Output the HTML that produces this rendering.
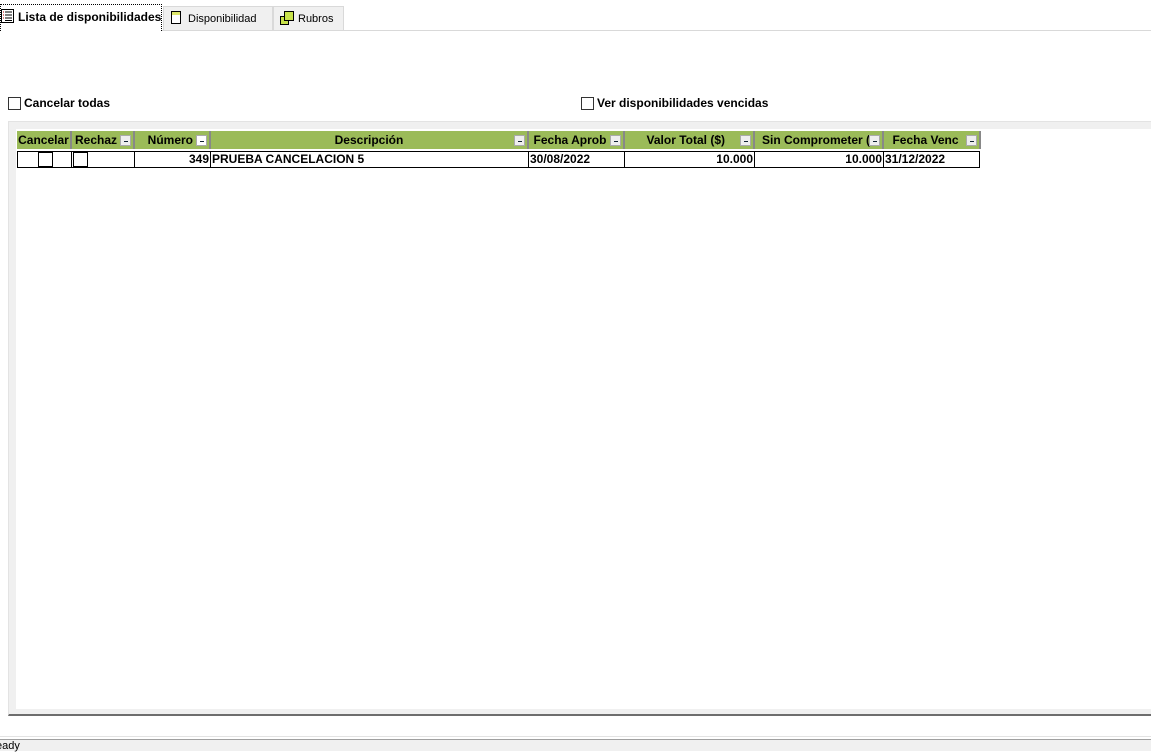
<!DOCTYPE html>
<html><head><style>
body{margin:0;width:1151px;height:750px;background:#fff;font-family:"Liberation Sans",sans-serif;font-size:12px;position:relative;overflow:hidden}
.abs{position:absolute;white-space:nowrap}
.tab{position:absolute;top:6px;height:24px;border:1px solid #d9d9d9;border-bottom:none;background:#f0f0f0;font-size:11px;line-height:24px;box-sizing:border-box;padding-left:6px;white-space:nowrap}
.cb{position:absolute;width:13px;height:13px;border:1px solid #333;background:#fff;box-sizing:border-box}
.h{position:absolute;top:131px;height:18px;background:#9bbb59;border-right:2px solid #888;box-sizing:border-box;font-weight:bold;line-height:18px;font-size:12px;text-align:center;color:#000;overflow:hidden;white-space:nowrap}
.dd{position:absolute;right:2px;top:4px;width:11px;height:11px;background:#eee;border:1px solid #aaa;box-sizing:border-box}
.dd:after{content:"";position:absolute;left:3px;top:5px;width:4px;height:1px;background:#123}
.c{position:absolute;top:151px;height:17px;border:1px solid #000;border-left:none;box-sizing:border-box;font-weight:bold;line-height:15px;font-size:12px;white-space:nowrap;padding:0 1px}
</style></head><body>
<div class="abs" style="left:0;top:30px;width:1151px;height:1px;background:#d9d9d9"></div>
<div class="tab" style="left:0;top:4px;height:27px;width:162px;background:#fff;border:1px dotted #000;border-bottom:none;font-weight:bold;font-size:12px;padding-left:17px;line-height:24px;overflow:hidden">Lista de disponibilidades</div>
<svg class="abs" style="left:1px;top:9px" width="14" height="14"><rect x="0.5" y="0.5" width="12" height="13" fill="#fff" stroke="#000"/><g stroke="#c00"><line x1="2" y1="3" x2="3" y2="3"/><line x1="2" y1="6" x2="3" y2="6"/><line x1="2" y1="9" x2="3" y2="9"/></g><g stroke="#000"><line x1="4" y1="3" x2="11" y2="3"/><line x1="4" y1="6" x2="11" y2="6"/><line x1="4" y1="9" x2="11" y2="9"/><line x1="4" y1="11.5" x2="11" y2="11.5"/></g></svg>
<div class="tab" style="left:163px;width:110px;padding-left:24px">Disponibilidad</div>
<svg class="abs" style="left:171px;top:11px" width="11" height="14"><rect x="0.5" y="0.5" width="9" height="12" fill="#fff" stroke="#000"/><rect x="1" y="1" width="8" height="3" fill="#dde66a"/></svg>
<div class="tab" style="left:273px;width:71px;padding-left:24px">Rubros</div>
<svg class="abs" style="left:280px;top:11px" width="14" height="14"><rect x="0.5" y="5.5" width="8" height="8" fill="#c8e24a" stroke="#000"/><rect x="4.5" y="0.5" width="9" height="9" fill="#c8e24a" stroke="#000"/></svg>

<div class="cb" style="left:8px;top:97px"></div>
<div class="abs" style="left:24px;top:96px;font-weight:bold">Cancelar todas</div>
<div class="cb" style="left:581px;top:97px"></div>
<div class="abs" style="left:597px;top:96px;font-weight:bold">Ver disponibilidades vencidas</div>

<div class="abs" style="left:8px;top:121px;width:1143px;height:595px;background:#f0f0f0;border-top:1px solid #e3e3e3;border-left:1px solid #e3e3e3;box-sizing:border-box;border-bottom:2px solid #6d6d6d"></div>
<div class="abs" style="left:16px;top:129px;width:1135px;height:580px;background:#fff"></div>

<div class="h" style="left:17px;width:55px">Cancelar</div>
<div class="h" style="left:72px;width:63px;text-align:left;padding-left:3px">Rechaz<span class="dd"></span></div>
<div class="h" style="left:135px;width:76px;text-align:right;padding-right:16px">Número<span class="dd" style="background:#fff"></span></div>
<div class="h" style="left:211px;width:318px">Descripción<span class="dd"></span></div>
<div class="h" style="left:529px;width:96px;padding-right:12px">Fecha Aprob<span class="dd"></span></div>
<div class="h" style="left:625px;width:130px;padding-right:28px;text-align:right">Valor Total ($)<span class="dd"></span></div>
<div class="h" style="left:755px;width:129px;text-align:left;padding-left:7px">Sin Comprometer ($<span class="dd"></span></div>
<div class="h" style="left:884px;width:97px;padding-right:12px">Fecha Venc<span class="dd"></span></div>

<div class="c" style="left:17px;width:55px;border-left:1px solid #000"><span class="cb" style="left:20px;top:0px;width:15px;height:15px;border-color:#000"></span></div>
<div class="c" style="left:72px;width:63px"><span class="cb" style="left:1px;top:0px;width:15px;height:15px;border-color:#000"></span></div>
<div class="c" style="left:135px;width:76px;text-align:right">349</div>
<div class="c" style="left:211px;width:318px">PRUEBA CANCELACION 5</div>
<div class="c" style="left:529px;width:96px">30/08/2022</div>
<div class="c" style="left:625px;width:130px;text-align:right">10.000</div>
<div class="c" style="left:755px;width:129px;text-align:right">10.000</div>
<div class="c" style="left:884px;width:96px">31/12/2022</div>

<div class="abs" style="left:0;top:736px;width:1151px;height:1px;background:#e3e3e3"></div>
<div class="abs" style="left:0;top:739px;width:1151px;height:11px;background:#f0f0f0;border-top:1px solid #a0a0a0"></div>
<div class="abs" style="left:-4px;top:739px;font-size:11px;line-height:14px">eady</div>
</body></html>
